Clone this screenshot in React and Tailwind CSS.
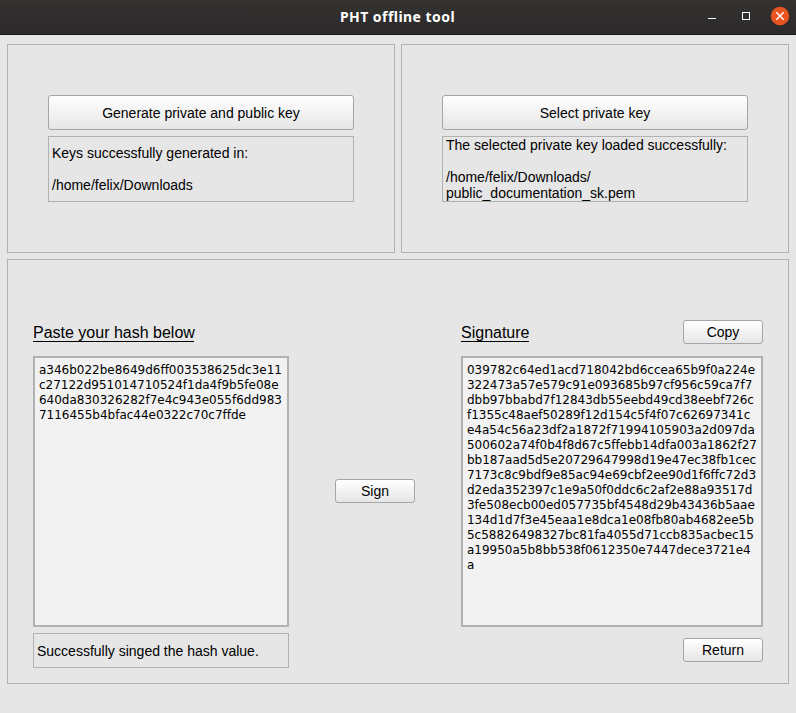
const HASH = [
  'a346b022be8649d6ff003538625dc3e11',
  'c27122d951014710524f1da4f9b5fe08e',
  '640da830326282f7e4c943e055f6dd983',
  '7116455b4bfac44e0322c70c7ffde',
];

const SIGNATURE = [
  '039782c64ed1acd718042bd6ccea65b9f0a224e',
  '322473a57e579c91e093685b97cf956c59ca7f7',
  'dbb97bbabd7f12843db55eebd49cd38eebf726c',
  'f1355c48aef50289f12d154c5f4f07c62697341c',
  'e4a54c56a23df2a1872f71994105903a2d097da',
  '500602a74f0b4f8d67c5ffebb14dfa003a1862f27',
  'bb187aad5d5e20729647998d19e47ec38fb1cec',
  '7173c8c9bdf9e85ac94e69cbf2ee90d1f6ffc72d3',
  'd2eda352397c1e9a50f0ddc6c2af2e88a93517d',
  '3fe508ecb00ed057735bf4548d29b43436b5aae',
  '134d1d7f3e45eaa1e8dca1e08fb80ab4682ee5b',
  '5c58826498327bc81fa4055d71ccb835acbec15',
  'a19950a5b8bb538f0612350e7447dece3721e4',
  'a',
];

function Button({ className, children }) {
  return (
    <button
      className={`flex shrink-0 items-center justify-center rounded-[3px] border border-[#a5a5a5] bg-linear-to-b from-white to-[#e6e6e6] text-sm/4 ${className}`}
    >
      {children}
    </button>
  );
}

function TextArea({ lines, className }) {
  return (
    <div
      className={`h-[271px] shrink-0 border-2 border-[#b1b1b1] bg-[#f2f2f2] pt-[5px] pl-1 font-['DejaVu_Sans',sans-serif] text-[12px] leading-[15px] tracking-[-0.01px] whitespace-nowrap ${className}`}
    >
      {lines.map((line) => (
        <div key={line}>{line}</div>
      ))}
    </div>
  );
}

function KeyPanel({ action, children }) {
  return (
    <section className="flex h-[209px] w-[388px] flex-col gap-1.5 border border-[#b1b1b1] px-10 pt-[50px]">
      <Button className="h-[35px] w-full">{action}</Button>
      <div className="flex h-[66px] flex-col justify-center border border-[#b1b1b1] pl-[3px] text-sm/4">
        {children}
      </div>
    </section>
  );
}

function TitleBar() {
  return (
    <header className="flex h-[35px] items-center border-b border-[#1c1a1a] bg-linear-to-b from-[#353331] to-[#2b292a] pr-[6px] pb-[2px] text-white">
      <div className="w-[91px]" />
      <h1 className="flex-1 pt-[2px] text-center font-['Noto_Sans',sans-serif] text-[14px] leading-5 font-bold tracking-[0.45px] whitespace-nowrap">
        PHT offline tool
      </h1>
      <svg width="86" height="20" viewBox="0 0 86 20" fill="none">
        <path d="M4 12.5h8" stroke="#fff" />
        <rect x="38.5" y="6.5" width="7" height="7" stroke="#fff" />
        <circle cx="76" cy="10" r="9.2" fill="#e95420" />
        <path d="M72.3 6.3l7.4 7.4M79.7 6.3l-7.4 7.4" stroke="#fff" strokeWidth="1.4" />
      </svg>
    </header>
  );
}

export default function App() {
  return (
    <div className="h-[713px] w-[796px] overflow-hidden bg-[#e6e6e6] font-['Liberation_Sans',Arial,sans-serif] text-black">
      <TitleBar />
      <main className="flex flex-col gap-1.5 px-[7px] pt-[9px]">
        <div className="flex gap-1.5">
          <KeyPanel action="Generate private and public key">
            <p>Keys successfully generated in:</p>
            <p className="mt-4">/home/felix/Downloads</p>
          </KeyPanel>
          <KeyPanel action="Select private key">
            <p>The selected private key loaded successfully:</p>
            <p className="mt-4">/home/felix/Downloads/</p>
            <p>public_documentation_sk.pem</p>
          </KeyPanel>
        </div>
        <section className="flex h-[425px] border border-[#b1b1b1] pt-[60px] pl-[25px]">
          <div className="w-[256px]">
            <div className="flex h-9 items-start">
              <h2 className="mt-1 h-[18px] w-[161px] border-b border-black text-[16px] leading-[18px] whitespace-nowrap">
                Paste your hash below
              </h2>
            </div>
            <TextArea lines={HASH} className="w-[256px]" />
            <div className="mt-1.5 flex h-[35px] items-center border border-[#b1b1b1] pl-[3px] text-sm/4">
              Successfully singed the hash value.
            </div>
          </div>
          <div className="ml-[46px] pt-[159px]">
            <Button className="h-6 w-20">Sign</Button>
          </div>
          <div className="ml-[46px] flex w-[302px] flex-col">
            <div className="flex h-9 items-start justify-between">
              <h2 className="mt-1 h-[18px] w-[68px] border-b border-black text-[16px] leading-[18px]">Signature</h2>
              <Button className="h-6 w-20">Copy</Button>
            </div>
            <TextArea lines={SIGNATURE} className="w-[302px]" />
            <Button className="mt-[11px] h-6 w-20 self-end">Return</Button>
          </div>
        </section>
      </main>
    </div>
  );
}
